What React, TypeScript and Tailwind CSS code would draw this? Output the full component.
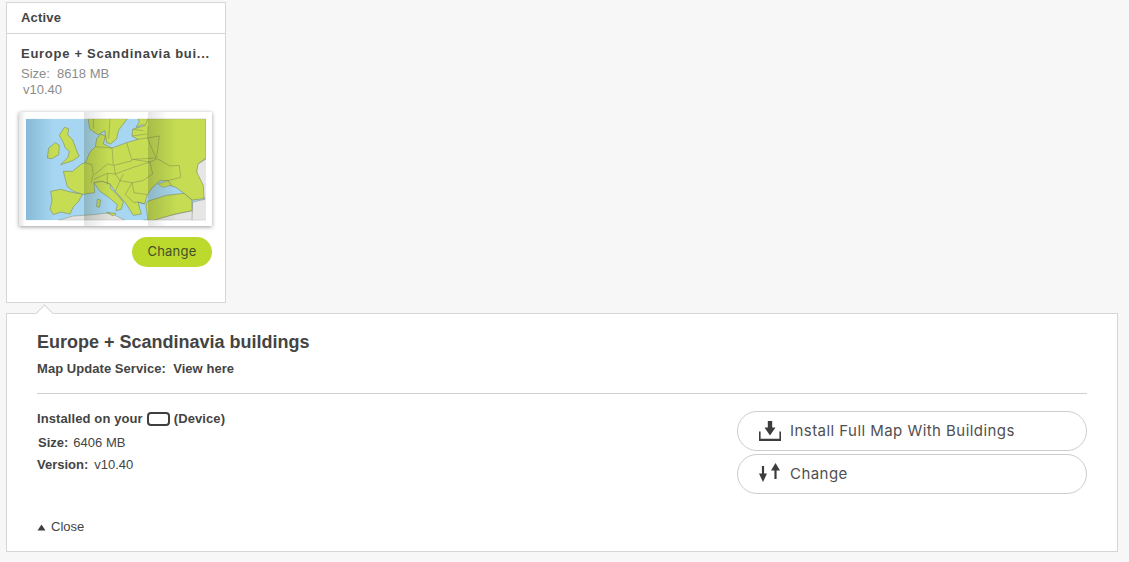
const LAND = "#c6dd52";
const BORDER = "#72795a";

function MapThumb() {
  return (
    <svg width="193" height="114" viewBox="27 20 579 342" className="block shadow-[0_1px_4px_rgba(0,0,0,0.4)]" aria-hidden="true">
      <defs>
        <linearGradient id="left" x1="0" x2="1" y1="0" y2="0">
          <stop offset="0" stopColor="#4f86a8" stopOpacity="0.35" />
          <stop offset="1" stopColor="#4f86a8" stopOpacity="0" />
        </linearGradient>
        <linearGradient id="fold" x1="0" x2="1" y1="0" y2="0">
          <stop offset="0" stopColor="#3c4a20" stopOpacity="0.22" />
          <stop offset="1" stopColor="#3c4a20" stopOpacity="0" />
        </linearGradient>
        <linearGradient id="paper" x1="0" x2="1" y1="0" y2="0">
          <stop offset="0" stopColor="#000000" stopOpacity="0.1" />
          <stop offset="1" stopColor="#000000" stopOpacity="0" />
        </linearGradient>
        <linearGradient id="edgeL" x1="0" x2="1" y1="0" y2="0">
          <stop offset="0" stopColor="#000000" stopOpacity="0.1" />
          <stop offset="1" stopColor="#000000" stopOpacity="0" />
        </linearGradient>
        <clipPath id="inner">
          <rect x="48" y="40" width="540" height="305" />
        </clipPath>
        <filter id="soft">
          <feGaussianBlur stdDeviation="0.8" />
        </filter>
      </defs>
      <rect x="27" y="20" width="579" height="342" fill="#ffffff" />
      <rect x="27" y="20" width="21" height="342" fill="url(#edgeL)" />
      <rect x="222" y="20" width="70" height="342" fill="url(#paper)" />
      <rect x="414" y="20" width="60" height="342" fill="url(#paper)" />
      <g clipPath="url(#inner)">
        <rect x="48" y="40" width="540" height="305" fill="#a6d6f1" />
        <g filter="url(#soft)">
          <path d="M145 345L190 332L250 328L300 322L345 345Z" fill="#e2e2e2" stroke={BORDER} strokeWidth="1.2" />
          <path d="M400 345L440 338L500 326L546 316L560 345Z" fill="#e2e2e2" stroke={BORDER} strokeWidth="1.2" />
          <path d="M560 178L590 160V345H546L548 290L585 282L560 232Z" fill="#e6e6e6" stroke={BORDER} strokeWidth="1.2" />
          <g fill={LAND} stroke={BORDER} strokeWidth="1.5" strokeLinejoin="round">
            {/* Great Britain */}
            <path d="M163 66L176 70L173 88L188 104L204 146L208 152L188 166L152 178L174 156L178 138L166 128L160 112L148 90Z" />
            {/* Ireland */}
            <path d="M116 128L136 112L148 120L146 148L126 160L112 158Z" />
            {/* Iberia */}
            <path d="M122 258L152 252L190 262L218 266L206 288L190 304L180 326L152 320L130 328L120 312L126 285Z" />
            {/* Norway, Sweden */}
            <path d="M234 40H352L340 56L326 74L320 100L302 116L290 112L284 76L264 88L240 72Z" />
            {/* Finland */}
            <path d="M384 40H414V62L396 58L378 66L388 50Z" />
            {/* Mainland and Russia */}
            <path d="M226 172L240 140L256 124L260 100L272 86L286 92L280 116L306 128L350 112L384 102L366 92L368 72L406 60L414 40H588V158L564 176L560 200L580 240L582 280L546 284L522 264L498 246L484 242L474 226L450 226L426 248L412 268L404 296L384 290L394 326L370 330L346 292L316 258L300 236L276 228L252 232L254 262L218 267L190 258L172 244L160 198L188 198L214 176Z" />
            {/* Italy */}
            <path d="M252 232L276 228L300 236L302 250L322 268L340 290L334 312L318 316L322 298L296 276L270 258Z" />
            {/* Turkey */}
            <path d="M412 288L470 270L522 264L546 284L546 316L496 326L430 345H414L408 302Z" />
            <path d="M262 282L272 284L268 306L260 304Z" />
            <path d="M290 322L318 324L310 332Z" />
          </g>
          <g fill="none" stroke={BORDER} strokeWidth="1.3">
            <path d="M226 172L246 178L250 205L244 232" />
            <path d="M256 124L306 128L310 180L292 176L254 208" />
            <path d="M350 112L366 166L312 180L316 206L292 204L252 222" />
            <path d="M384 102L412 98L438 158L368 162" />
            <path d="M368 162L420 170L442 160L480 182L508 180L512 216L474 226" />
            <path d="M412 98L414 62M412 98L448 92L440 156" />
            <path d="M316 206L370 186L420 170L428 206L398 226L366 232L330 226L316 206" />
            <path d="M330 226L316 258M366 232L372 262L412 268M366 232L346 268L372 292" />
            <path d="M292 204L292 238M340 206L330 226" />
            <path d="M366 92L410 86M368 72L400 76" />
            <path d="M404 296L384 290L372 292" />
            <path d="M250 40V70M300 40L296 100" />
          </g>
          <path d="M444 236L474 226L484 240L458 246Z" fill={LAND} stroke={BORDER} strokeWidth="1.2" />
        </g>
        <rect x="48" y="40" width="84" height="305" fill="url(#left)" />
        <rect x="222" y="40" width="80" height="305" fill="url(#fold)" />
        <rect x="414" y="40" width="90" height="305" fill="url(#fold)" />
      </g>
    </svg>
  );
}

function InstallIcon() {
  return (
    <svg width="22" height="20" viewBox="0 0 22 20" aria-hidden="true" className="text-[#3c3c3c]">
      <path d="M8.8 0h4.4v6.5h3.3L11 14.5 5.5 6.5h3.3z" fill="currentColor" />
      <path d="M0.8 10.5v8h20.4v-8" fill="none" stroke="currentColor" strokeWidth="1.6" />
      <path d="M0 18h22v2H0z" fill="currentColor" />
    </svg>
  );
}

function SwapIcon() {
  return (
    <svg width="22" height="19" viewBox="0 0 22 19" aria-hidden="true" className="-mt-[3px] text-[#3c3c3c]">
      <path d="M4 3v9" fill="none" stroke="currentColor" strokeWidth="2.2" />
      <path d="M0 10.5h8L4 19z" fill="currentColor" />
      <path d="M16.5 16V6" fill="none" stroke="currentColor" strokeWidth="2.2" />
      <path d="M12 7.5h9L16.5 0z" fill="currentColor" />
    </svg>
  );
}

function PillButton({ icon, label }: { icon: React.ReactNode; label: string }) {
  return (
    <button className="flex h-10 w-[350px] items-center rounded-[20px] border border-[#cccccc] bg-white pl-[21px] font-['Inter',sans-serif] text-[15px] tracking-[0.45px] text-[#505050]">
      <span className="flex w-[31px] shrink-0 items-center">{icon}</span>
      {label}
    </button>
  );
}

export default function App() {
  return (
    <div className="min-h-[562px] bg-[#f7f7f7] pl-[6px] pr-[11px] pt-[2px] font-['Liberation_Sans',Arial,sans-serif] text-[#444444]">
      {/* Active map card */}
      <div className="h-[301px] w-[220px] border border-[#d6d6d6] bg-white">
        <div className="flex h-[31px] items-center border-b border-[#d6d6d6] pl-[14px] text-[13px] font-bold tracking-[0.2px]">
          Active
        </div>
        <div className="pl-[12px] pr-[13px]">
          <div className="mt-[11px] whitespace-nowrap pl-[2px] text-[13px] font-bold leading-[17px] tracking-[0.72px]">
            Europe + Scandinavia bui...
          </div>
          <div className="mt-[4px] pl-[2px] text-[13px] leading-[16px] text-[#8c8c8c]">
            <div>Size:&nbsp; 8618 MB</div>
            <div className="pl-[2px]">v10.40</div>
          </div>
          <div className="mt-[14px]">
            <MapThumb />
          </div>
          <div className="mt-[11px] flex justify-end">
            <button className="h-[30px] w-[80px] rounded-[15px] bg-[#bcd92d] font-['Inter',sans-serif] text-[13px] tracking-[0.2px] text-[#45502a]">
              Change
            </button>
          </div>
        </div>
      </div>

      {/* Detail panel */}
      <div className="relative mt-[10px] h-[239px] border border-[#d6d6d6] bg-white px-[30px]">
        <div className="absolute left-[31px] top-[-7px] size-[13px] rotate-45 border-l border-t border-[#d6d6d6] bg-white" />
        <div className="relative pt-[16px] text-[18px] font-bold leading-[24px]">Europe + Scandinavia buildings</div>
        <div className="mt-[7px] text-[13px] font-bold leading-[16px] tracking-[0.05px]">
          Map Update Service:&nbsp; View here
        </div>
        <div className="mt-[16px] border-t border-[#cfcfcf]" />
        <div className="mt-[17px] flex justify-between">
          <div className="text-[13px] leading-[16px]">
            <div className="flex items-center font-bold tracking-[0.1px]">
              Installed on your
              <span className="mx-[4px] inline-block h-[14px] w-[23px] rounded-[4px] border-2 border-[#3f3f3f]" />
              (Device)
            </div>
            <div className="mt-[8px] pl-px">
              <span className="font-bold">Size:</span>
              <span className="ml-[5px]">6406 MB</span>
            </div>
            <div className="mt-[6px]">
              <span className="font-bold">Version:</span>
              <span className="ml-[6px]">v10.40</span>
            </div>
          </div>
          <div className="flex flex-col gap-[3px]">
            <PillButton icon={<InstallIcon />} label="Install Full Map With Buildings" />
            <PillButton icon={<SwapIcon />} label="Change" />
          </div>
        </div>
        <div className="absolute bottom-[16px] left-[30px] flex items-center text-[13px] leading-[16px]">
          <svg width="9" height="7" viewBox="0 0 9 7" className="mr-[5px]" aria-hidden="true">
            <path d="M4.5 0.5L8.5 6.5H0.5Z" fill="#3f3f3f" />
          </svg>
          Close
        </div>
      </div>
    </div>
  );
}
